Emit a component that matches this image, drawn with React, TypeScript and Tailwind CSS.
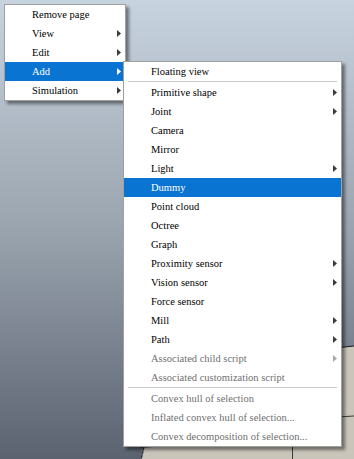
import React from 'react';

type Item =
  | { kind: 'item'; label: string; sub?: boolean; disabled?: boolean; active?: boolean }
  | { kind: 'sep' };

const mainMenu: Item[] = [
  { kind: 'item', label: 'Remove page' },
  { kind: 'item', label: 'View', sub: true },
  { kind: 'item', label: 'Edit', sub: true },
  { kind: 'item', label: 'Add', sub: true, active: true },
  { kind: 'item', label: 'Simulation', sub: true },
];

const addMenu: Item[] = [
  { kind: 'item', label: 'Floating view' },
  { kind: 'sep' },
  { kind: 'item', label: 'Primitive shape', sub: true },
  { kind: 'item', label: 'Joint', sub: true },
  { kind: 'item', label: 'Camera' },
  { kind: 'item', label: 'Mirror' },
  { kind: 'item', label: 'Light', sub: true },
  { kind: 'item', label: 'Dummy', active: true },
  { kind: 'item', label: 'Point cloud' },
  { kind: 'item', label: 'Octree' },
  { kind: 'item', label: 'Graph' },
  { kind: 'item', label: 'Proximity sensor', sub: true },
  { kind: 'item', label: 'Vision sensor', sub: true },
  { kind: 'item', label: 'Force sensor' },
  { kind: 'item', label: 'Mill', sub: true },
  { kind: 'item', label: 'Path', sub: true },
  { kind: 'item', label: 'Associated child script', sub: true, disabled: true },
  { kind: 'item', label: 'Associated customization script', disabled: true },
  { kind: 'sep' },
  { kind: 'item', label: 'Convex hull of selection', disabled: true },
  { kind: 'item', label: 'Inflated convex hull of selection...', disabled: true },
  { kind: 'item', label: 'Convex decomposition of selection...', disabled: true },
];

function Arrow({ color }: { color: string }) {
  return (
    <svg width="4" height="7" viewBox="0 0 4 7" className="shrink-0">
      <path d="M0 0 L4 3.5 L0 7 Z" fill={color} />
    </svg>
  );
}

function MenuRows({ items }: { items: Item[] }) {
  return (
    <>
      {items.map((item, i) => {
        if (item.kind === 'sep') {
          return (
            <div key={i} className="h-[2px] px-[4px]">
              <div className="h-px bg-[#c8c8c8]" />
            </div>
          );
        }
        const text = item.active ? 'text-white' : item.disabled ? 'text-[#6f6f6f]' : 'text-black';
        const arrow = item.active ? '#ffffff' : item.disabled ? '#a8a8a8' : '#3a3a3a';
        return (
          <div
            key={i}
            className={`flex h-[19px] items-center pl-[27px] pr-[4px] ${item.active ? 'bg-[#0a74d2]' : ''}`}
          >
            <span className={`flex-1 whitespace-nowrap pt-px text-[10.5px] leading-none ${text}`}>
              {item.label}
            </span>
            {item.sub && <Arrow color={arrow} />}
          </div>
        );
      })}
    </>
  );
}

export default function App() {
  return (
    <div className="relative h-[459px] w-[354px] overflow-hidden bg-gradient-to-b from-[#c7d3df] via-[#9aa4af] to-[#5b6370] font-['Liberation_Serif','Times_New_Roman',serif]">
      {/* 3d scene floor behind the menus */}
      <svg className="absolute inset-0" width="354" height="459" viewBox="0 0 354 459">
        <polygon points="142,459 146,440 200,362 354,346 354,459" fill="#c9c5ba" />
        <polyline points="200,362 354,346" fill="none" stroke="#1a1a1a" strokeWidth="1" />
        <polyline points="146,440 141,459" fill="none" stroke="#222" strokeWidth="1" strokeDasharray="2 2" />
        <line x1="292.5" y1="440" x2="292.5" y2="459" stroke="#3a3a3a" strokeWidth="1" />
        <line x1="330" y1="417.5" x2="354" y2="416" stroke="#3a3a3a" strokeWidth="1" />
        <line x1="140" y1="447.5" x2="160" y2="446" stroke="#3a3a3a" strokeWidth="1" />
      </svg>

      <div className="absolute left-[4px] top-[4px] w-[122px] border border-[#a0a0a0] bg-white shadow-[3px_3px_3px_rgba(0,0,0,0.45)]">
        <MenuRows items={mainMenu} />
      </div>

      <div className="absolute left-[123px] top-[61px] w-[219px] border border-[#a0a0a0] bg-white shadow-[3px_3px_3px_rgba(0,0,0,0.45)]">
        <MenuRows items={addMenu} />
      </div>
    </div>
  );
}
